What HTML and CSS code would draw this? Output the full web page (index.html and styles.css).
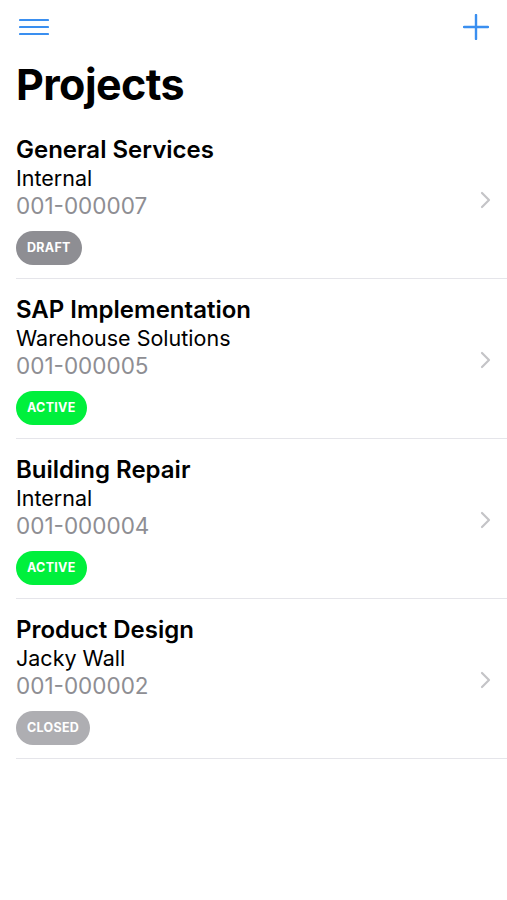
FILE: index.html
```html
<!DOCTYPE html>
<html lang="en">
<head>
  <meta charset="UTF-8">
  <meta name="viewport" content="width=device-width, initial-scale=1.0">
  <title>Projects</title>
  <link rel="stylesheet" href="styles.css">
</head>
<body>
  <div class="app">
    <div class="topbar">
      <button class="icon-btn" aria-label="Menu">
        <svg width="30" height="18" viewBox="0 0 30 18">
          <path d="M1 2h28M1 9h28M1 16h28" stroke="currentColor" stroke-width="2.2" stroke-linecap="round"/>
        </svg>
      </button>
      <button class="icon-btn" aria-label="Add project">
        <svg width="26" height="26" viewBox="0 0 26 26">
          <path d="M13 1v24M1 13h24" stroke="currentColor" stroke-width="2.4" stroke-linecap="round"/>
        </svg>
      </button>
    </div>

    <h1>Projects</h1>

    <ul class="project-list">
      <li class="project">
        <div class="project-info">
          <div class="project-title">General Services</div>
          <div class="project-client">Internal</div>
          <div class="project-id">001-000007</div>
          <span class="badge badge-draft">DRAFT</span>
        </div>
        <svg class="chevron" width="12" height="18" viewBox="0 0 12 18">
          <path d="M2 2l7 7-7 7" fill="none" stroke="currentColor" stroke-width="2.2" stroke-linecap="round" stroke-linejoin="round"/>
        </svg>
      </li>
      <li class="project">
        <div class="project-info">
          <div class="project-title">SAP Implementation</div>
          <div class="project-client">Warehouse Solutions</div>
          <div class="project-id">001-000005</div>
          <span class="badge badge-active">ACTIVE</span>
        </div>
        <svg class="chevron" width="12" height="18" viewBox="0 0 12 18">
          <path d="M2 2l7 7-7 7" fill="none" stroke="currentColor" stroke-width="2.2" stroke-linecap="round" stroke-linejoin="round"/>
        </svg>
      </li>
      <li class="project">
        <div class="project-info">
          <div class="project-title">Building Repair</div>
          <div class="project-client">Internal</div>
          <div class="project-id">001-000004</div>
          <span class="badge badge-active">ACTIVE</span>
        </div>
        <svg class="chevron" width="12" height="18" viewBox="0 0 12 18">
          <path d="M2 2l7 7-7 7" fill="none" stroke="currentColor" stroke-width="2.2" stroke-linecap="round" stroke-linejoin="round"/>
        </svg>
      </li>
      <li class="project">
        <div class="project-info">
          <div class="project-title">Product Design</div>
          <div class="project-client">Jacky Wall</div>
          <div class="project-id">001-000002</div>
          <span class="badge badge-closed">CLOSED</span>
        </div>
        <svg class="chevron" width="12" height="18" viewBox="0 0 12 18">
          <path d="M2 2l7 7-7 7" fill="none" stroke="currentColor" stroke-width="2.2" stroke-linecap="round" stroke-linejoin="round"/>
        </svg>
      </li>
    </ul>
  </div>
</body>
</html>
```

FILE: styles.css
```css
body {
  margin: 0;
  font-family: 'Inter', 'Roboto', sans-serif;
  background-color: #fff;
  color: #000;
}

.app {
  width: 507px;
}

.topbar {
  display: flex;
  justify-content: space-between;
  align-items: center;
  height: 54px;
  padding: 0 18px 0 19px;
}

.icon-btn {
  background: none;
  border: none;
  padding: 0;
  color: #3a8ff0;
  display: flex;
  cursor: pointer;
}

h1 {
  margin: 0;
  padding: 0 16px 5px;
  font-size: 43px;
  font-weight: 700;
  line-height: 60px;
  letter-spacing: -0.6px;
}

.project-list {
  list-style: none;
  margin: 0;
  padding: 0;
}

.project {
  display: flex;
  align-items: center;
  margin-left: 16px;
  padding: 16px 15px 13px 0;
  border-bottom: 1px solid #e5e5ea;
}

.project-info {
  flex: 1;
  display: flex;
  flex-direction: column;
  align-items: flex-start;
}

.project-title {
  font-size: 24px;
  font-weight: 600;
  line-height: 29px;
}

.project-client {
  font-size: 21.5px;
  line-height: 28px;
}

.project-id {
  font-size: 22.5px;
  line-height: 28px;
  color: #8e8e93;
}

.badge {
  margin-top: 11px;
  height: 34px;
  line-height: 34px;
  padding: 0 11px;
  border-radius: 17px;
  color: #fff;
  font-size: 12.5px;
  font-weight: 700;
  letter-spacing: 0.3px;
}

.badge-draft {
  background-color: #8e8e93;
}

.badge-active {
  background-color: #00f03c;
}

.badge-closed {
  background-color: #aeaeb2;
}

.chevron {
  color: #c4c4c7;
}
```
